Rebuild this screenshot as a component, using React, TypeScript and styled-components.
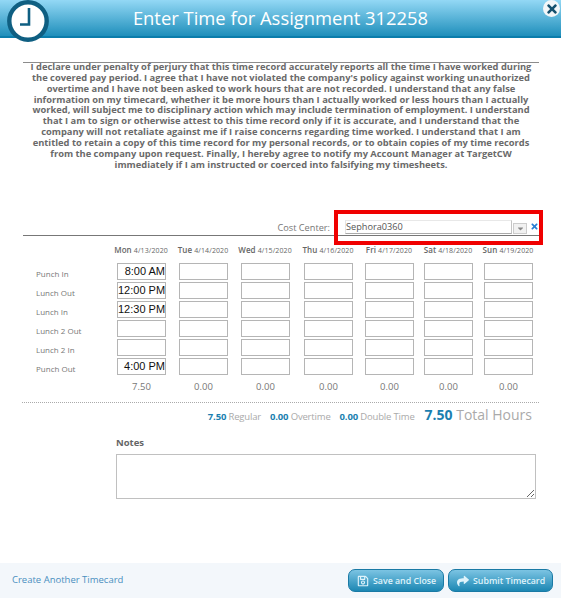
import styled, { createGlobalStyle } from "styled-components";
import { FaCaretDown, FaRegSave, FaShare, FaTimes } from "react-icons/fa";

const GlobalStyle = createGlobalStyle`
  html, body {
    margin: 0;
    padding: 0;
    background: #fff;
  }
  body {
    font-family: "Open Sans", "Noto Sans", sans-serif;
  }
`;

const Page = styled.div`
  position: relative;
  width: 561px;
  height: 598px;
  overflow: hidden;
  display: flex;
  flex-direction: column;
`;

const Header = styled.div`
  height: 36px;
  border-bottom: 2px solid #0b7dab;
  background: linear-gradient(#93d8f5, #1f8fbb);
  color: #fff;
  font-size: 18.4px;
  line-height: 35px;
  text-align: center;
`;

const ClockBadge = styled.svg`
  position: absolute;
  left: 7px;
  top: 0;
  width: 42px;
  height: 43px;
`;

const CloseBadge = styled.div`
  position: absolute;
  left: 543px;
  top: 0;
  width: 17px;
  height: 17px;
  border-radius: 50%;
  background: #f2f6f8;
  color: #14506e;
  font-size: 14px;
  display: flex;
  align-items: center;
  justify-content: center;
`;

const Legal = styled.div`
  margin: 24px 22px 0 23px;
  border-top: 1px solid #8c8c8c;
  color: #6a6a6a;
  font-size: 9.33px;
  font-weight: 700;
  line-height: 10.85px;
  text-align: center;
  white-space: nowrap;
  height: 148px;
`;

const LegalLine = styled.div`
  &:first-child {
    margin-top: -1px;
  }
`;

const CostRow = styled.div`
  margin: 0 22px 0 23px;
  height: 24px;
  border-bottom: 1px solid #777;
  display: flex;
  justify-content: flex-end;
  align-items: flex-end;
`;

const CostLabel = styled.label`
  color: #777;
  font-size: 9.2px;
  line-height: 13px;
  margin: 0 15px 1px 0;
`;

const CostSelect = styled.div`
  box-sizing: border-box;
  width: 167px;
  height: 14px;
  margin-bottom: 1px;
  border: 1px solid #c4c4c4;
  border-bottom-color: #aaa;
  border-left-color: #e4e4e4;
  border-top-color: #e8e8e8;
  color: #555;
  font-size: 9.2px;
  line-height: 12px;
`;

const CostArrow = styled.div`
  box-sizing: border-box;
  width: 14px;
  height: 11px;
  margin: 0 0 1px 1px;
  border: 1px solid #ccc;
  background: #f1f1f1;
  color: #888;
  font-size: 9px;
  display: flex;
  align-items: center;
  justify-content: center;
`;

const CostClear = styled.div`
  width: 13px;
  margin: 0 -2px 2px 1px;
  color: #2a7fd4;
  font-size: 9px;
  line-height: 10px;
  text-align: center;
`;

const RedFrame = styled.div`
  position: absolute;
  left: 334px;
  top: 210px;
  width: 209px;
  height: 35px;
  box-sizing: border-box;
  border: 4px solid #f00000;
`;

const TimeGrid = styled.div`
  display: grid;
  grid-template-columns: 81px 62px 62px 63px 61px 59px 60px 49px;
  grid-auto-rows: 19px;
  margin: 8px 0 0 36px;
  width: 497px;
`;

const DayHead = styled.div`
  display: flex;
  justify-content: center;
  align-items: baseline;
  gap: 2px;
  width: 48px;
  height: 19px;
  white-space: nowrap;
  color: #666;
  font-size: 7px;
  line-height: 11px;
  letter-spacing: 0.1px;

  b {
    font-size: 8px;
    font-weight: 600;
  }
`;

const RowLabel = styled.div`
  color: #777;
  font-size: 8px;
  line-height: 21px;
  white-space: nowrap;
`;

const TimeInput = styled.input`
  box-sizing: border-box;
  width: 49px;
  height: 17px;
  margin: 0;
  padding: 0 0 1px 0;
  border: 1px solid #b5b5b5;
  background: #fff;
  color: #111;
  font-family: "Liberation Sans", Arial, sans-serif;
  font-size: 11px;
  text-align: right;
  outline: none;
`;

const DayTotal = styled.div`
  width: 49px;
  color: #777;
  font-size: 9.5px;
  line-height: 19px;
  text-align: center;
`;

const Summary = styled.div`
  margin: 6px 22px 0 22px;
  padding: 2px 7px 0 0;
  border-top: 1px dotted #aaa;
  display: flex;
  justify-content: flex-end;
  align-items: baseline;
  height: 30px;
  box-sizing: border-box;
`;

const Stat = styled.span`
  margin-left: 9px;
  color: #aaa;
  font-size: 9.5px;
  letter-spacing: -0.17px;

  b {
    color: #1b7fb0;
    font-weight: 700;
  }
`;

const TotalStat = styled.span`
  margin-left: 10px;
  color: #aaa;
  font-size: 14px;

  b {
    color: #1b7fb0;
    font-weight: 700;
  }
`;

const NotesBlock = styled.div`
  margin: 4px 25px 0 116px;
`;

const NotesLabel = styled.div`
  color: #666;
  font-size: 9.5px;
  font-weight: 700;
  line-height: 13px;
  margin-bottom: 5px;
`;

const NotesBox = styled.textarea`
  display: block;
  box-sizing: border-box;
  width: 420px;
  height: 45px;
  margin: 0;
  border: 1px solid #c0c0c0;
  outline: none;
`;

const Footer = styled.div`
  margin-top: auto;
  height: 35px;
  background: #f3f7fb;
  display: flex;
  align-items: flex-start;
  padding: 6px 8px 0 12px;
  box-sizing: border-box;
`;

const CreateLink = styled.a`
  color: #4a8fc0;
  font-size: 9.5px;
  line-height: 22px;
  margin-right: auto;
`;

const ActionButton = styled.button<{ $width: number }>`
  box-sizing: border-box;
  width: ${(p) => p.$width}px;
  height: 23px;
  margin: 0 0 0 4px;
  padding: 0 0 0 8px;
  border: 1px solid #1a7aa5;
  border-radius: 7px;
  background: linear-gradient(#7cc4e3, #1c87b3);
  color: #dff3fb;
  font-family: "Open Sans", sans-serif;
  font-size: 8.8px;
  font-weight: 600;
  display: flex;
  align-items: center;
  gap: 4px;
  white-space: nowrap;

  svg {
    font-size: 12px;
    flex: none;
  }
`;

const legalLines = [
  "I declare under penalty of perjury that this time record accurately reports all the time I have worked during",
  "the covered pay period. I agree that I have not violated the company's policy against working unauthorized",
  "overtime and I have not been asked to work hours that are not recorded. I understand that any false",
  "information on my timecard, whether it be more hours than I actually worked or less hours than I actually",
  "worked, will subject me to disciplinary action which may include termination of employment. I understand",
  "that I am to sign or otherwise attest to this time record only if it is accurate, and I understand that the",
  "company will not retaliate against me if I raise concerns regarding time worked. I understand that I am",
  "entitled to retain a copy of this time record for my personal records, or to obtain copies of my time records",
  "from the company upon request. Finally, I hereby agree to notify my Account Manager at TargetCW",
  "immediately if I am instructed or coerced into falsifying my timesheets.",
];

const days = [
  ["Mon", "4/13/2020"],
  ["Tue", "4/14/2020"],
  ["Wed", "4/15/2020"],
  ["Thu", "4/16/2020"],
  ["Fri", "4/17/2020"],
  ["Sat", "4/18/2020"],
  ["Sun", "4/19/2020"],
];

const rows = [
  { label: "Punch In", monday: "8:00 AM" },
  { label: "Lunch Out", monday: "12:00 PM" },
  { label: "Lunch In", monday: "12:30 PM" },
  { label: "Lunch 2 Out", monday: "" },
  { label: "Lunch 2 In", monday: "" },
  { label: "Punch Out", monday: "4:00 PM" },
];

const totals = ["7.50", "0.00", "0.00", "0.00", "0.00", "0.00", "0.00"];

const TimeRow = ({ label, monday }: { label: string; monday: string }) => {
  return (
    <>
      <RowLabel>{label}</RowLabel>
      {days.map(([name], i) => (
        <TimeInput key={name} readOnly value={i === 0 ? monday : ""} />
      ))}
    </>
  );
};

const App = () => {
  return (
    <Page>
      <GlobalStyle />
      <Header>Enter Time for Assignment 312258</Header>
      <ClockBadge viewBox="0 0 42 43">
        <circle cx="21" cy="21" r="18.7" fill="#fff" stroke="#0f5f82" strokeWidth="4.4" />
        <path d="M22 8V24.5H13" fill="none" stroke="#0f5f82" strokeWidth="2.6" />
      </ClockBadge>
      <CloseBadge>
        <FaTimes />
      </CloseBadge>

      <Legal>
        {legalLines.map((line) => (
          <LegalLine key={line}>{line}</LegalLine>
        ))}
      </Legal>

      <CostRow>
        <CostLabel>Cost Center:</CostLabel>
        <CostSelect>Sephora0360</CostSelect>
        <CostArrow>
          <FaCaretDown />
        </CostArrow>
        <CostClear>
          <FaTimes />
        </CostClear>
      </CostRow>
      <RedFrame />

      <TimeGrid>
        <span />
        {days.map(([name, date]) => (
          <DayHead key={name}>
            <b>{name}</b> {date}
          </DayHead>
        ))}
        {rows.map((row) => (
          <TimeRow key={row.label} label={row.label} monday={row.monday} />
        ))}
        <span />
        {totals.map((total, i) => (
          <DayTotal key={i}>{total}</DayTotal>
        ))}
      </TimeGrid>

      <Summary>
        <Stat>
          <b>7.50</b> Regular
        </Stat>
        <Stat>
          <b>0.00</b> Overtime
        </Stat>
        <Stat>
          <b>0.00</b> Double Time
        </Stat>
        <TotalStat>
          <b>7.50</b> Total Hours
        </TotalStat>
      </Summary>

      <NotesBlock>
        <NotesLabel>Notes</NotesLabel>
        <NotesBox />
      </NotesBlock>

      <Footer>
        <CreateLink>Create Another Timecard</CreateLink>
        <ActionButton $width={96}>
          <FaRegSave />
          Save and Close
        </ActionButton>
        <ActionButton $width={105}>
          <FaShare />
          Submit Timecard
        </ActionButton>
      </Footer>
    </Page>
  );
};

export default App;
